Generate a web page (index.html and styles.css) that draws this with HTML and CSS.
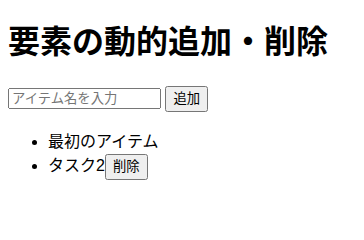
FILE: index.html
```html
<!DOCTYPE html>
<html lang="ja">
<head>
<meta charset="utf-8">
<title>要素の動的追加・削除</title>
<link rel="stylesheet" href="styles.css">
</head>
<body>
<h1 class="title">要素の動的追加・削除</h1>
<div class="form">
<input class="item-input" type="text" placeholder="アイテム名を入力">
<button class="btn">追加</button>
</div>
<ul class="list">
<li class="item">最初のアイテム</li>
<li class="item">タスク2<button class="btn">削除</button></li>
</ul>
</body>
</html>
```
FILE: styles.css
```css
body {
  margin: 8px;
  font-family: "Liberation Sans", "Noto Sans CJK JP", sans-serif;
}
.title {
  font-size: 32px;
  margin: 8px 0 24px;
}
.item-input {
  font-family: "Liberation Sans", "Noto Sans CJK JP", sans-serif;
  font-size: 13.333px;
  box-sizing: border-box;
  width: 153px;
  height: 21px;
}
.btn {
  font-family: "Liberation Sans", "Noto Sans CJK JP", sans-serif;
  font-size: 13.333px;
  line-height: 20px;
}
.list {
  margin: 16px 0;
  padding-left: 40px;
}
.item {
  line-height: normal;
}
```
